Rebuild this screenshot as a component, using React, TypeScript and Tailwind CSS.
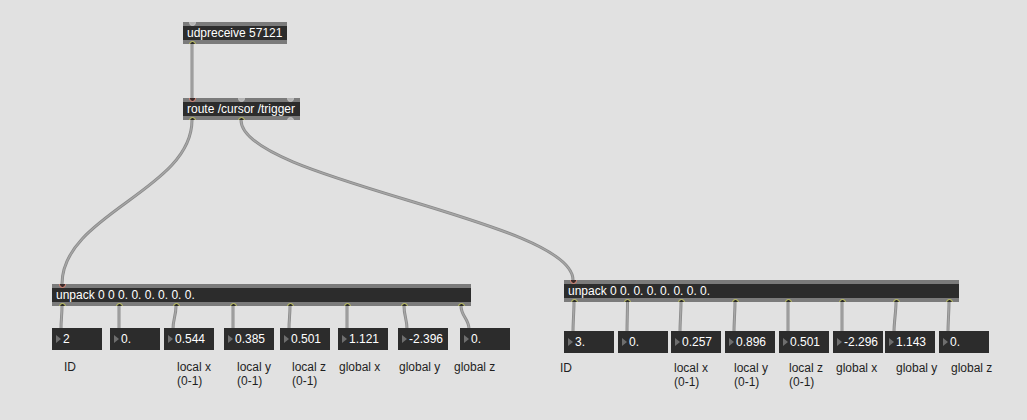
import React from "react";

type Dot = { x: number; kind: "in" | "inOn" | "out" | "outOff" };

const font = { fontFamily: '"Liberation Sans", Arial, sans-serif' };

// object box of the patch, placed at its spot on the canvas
function ObjBox({ x, y, w, text, dots }: { x: number; y: number; w: number; text: string; dots: Dot[] }) {
  return (
    <div className="absolute flex flex-col overflow-hidden" style={{ left: x, top: y, width: w }}>
      <div className="h-[4px] bg-[#7b7b7b]" />
      <div className="h-[14px] bg-[#2c2c2c] pl-[4px] text-[12px] leading-[14px] text-white whitespace-nowrap">{text}</div>
      <div className="h-[4px] bg-[#7b7b7b]" />
      {dots.map((d, i) => {
        const top = d.kind === "in" || d.kind === "inOn";
        let cls = "absolute w-[7px] h-[7px] rounded-full border ";
        if (d.kind === "in") cls += "bg-[#b4b4b4] border-[#c4c4c4]";
        else if (d.kind === "inOn") cls += "bg-[#3a2a2a] border-[#e8907e]";
        else if (d.kind === "out") cls += "bg-[#2a2a2a] border-[#d2d46a]";
        else cls += "bg-[#b4b4b4] border-[#c4c4c4]";
        return (
          <div
            key={i}
            className={cls}
            style={top ? { left: d.x - x - 3.5, top: -3.5 } : { left: d.x - x - 3.5, bottom: -3.5 }}
          />
        );
      })}
    </div>
  );
}

// number box with its comment label under it
function NumBox({ x, y, v, label, lx, ly }: { x: number; y: number; v: string; label: string[]; lx: number; ly: number }) {
  return (
    <div className="absolute flex flex-col items-start" style={{ left: x, top: y }}>
      <div className="h-[22px] w-[50px] bg-[#2c2c2c] flex items-center text-white text-[12px]">
        <svg width="5" height="8" viewBox="0 0 5 8" className="ml-[4px] mr-[2px] shrink-0">
          <polygon points="0,0 5,4 0,8" fill="#6e6e6e" />
        </svg>
        <span>{v}</span>
      </div>
      {label.length > 0 && (
        <div
          className="text-[12px] leading-[14px] text-[#1f1f1f] whitespace-nowrap"
          style={{ marginLeft: lx, marginTop: ly }}
        >
          {label.map((l, i) => (
            <div key={i}>{l}</div>
          ))}
        </div>
      )}
    </div>
  );
}

// [box x, value, label lines, label x]
type Item = [number, string, string[], number];

const leftBoxes: Item[] = [
  [52, "2", ["ID"], 64],
  [110, "0.", [], 0],
  [164, "0.544", ["local x", "(0-1)"], 177],
  [224, "0.385", ["local y", "(0-1)"], 237],
  [280, "0.501", ["local z", "(0-1)"], 292],
  [338, "1.121", ["global x"], 339],
  [398, "-2.396", ["global y"], 399],
  [460, "0.", ["global z"], 454],
];
const leftOuts = [62, 119, 176, 233, 290, 347, 404, 461];

const rightBoxes: Item[] = [
  [564, "3.", ["ID"], 560],
  [618, "0.", [], 0],
  [671, "0.257", ["local x", "(0-1)"], 674],
  [725, "0.896", ["local y", "(0-1)"], 734],
  [779, "0.501", ["local z", "(0-1)"], 789],
  [833, "-2.296", ["global x"], 836],
  [885, "1.143", ["global y"], 896],
  [939, "0.", ["global z"], 951],
];
const rightOuts = [574, 627.5, 681, 735, 788, 842, 896, 949];

function cord(x1: number, y1: number, x2: number, y2: number, k: number) {
  return `M${x1} ${y1} C${x1} ${y1 + k} ${x2} ${y2 - k} ${x2} ${y2}`;
}

export default function App() {
  const cords: string[] = [
    cord(192, 44, 192, 98, 10),
    cord(192, 120, 62, 284, 70),
    cord(241, 120, 573, 280, 60),
  ];
  leftOuts.forEach((o, i) => cords.push(cord(o, 306, leftBoxes[i][0] + 9, 329, 10)));
  rightOuts.forEach((o, i) => cords.push(cord(o, 302, rightBoxes[i][0] + 9, 332, 10)));

  return (
    <div className="relative w-[1027px] h-[420px] bg-[#e1e1e1] overflow-hidden" style={font}>
      <svg className="absolute inset-0" width="1027" height="420">
        {cords.map((d, i) => (
          <g key={i} fill="none">
            <path d={d} stroke="#8a8a8a" strokeWidth="3" />
            <path d={d} stroke="#a6a6a6" strokeWidth="1.4" />
          </g>
        ))}
      </svg>

      <ObjBox x={183} y={22} w={104} text="udpreceive 57121" dots={[{ x: 192, kind: "in" }, { x: 192, kind: "out" }]} />
      <ObjBox
        x={183}
        y={98}
        w={117}
        text="route /cursor /trigger"
        dots={[
          { x: 192, kind: "inOn" }, { x: 241, kind: "in" }, { x: 290, kind: "in" },
          { x: 192, kind: "out" }, { x: 241, kind: "out" }, { x: 290, kind: "outOff" },
        ]}
      />
      <ObjBox
        x={52}
        y={284}
        w={419}
        text="unpack 0 0 0. 0. 0. 0. 0. 0."
        dots={[{ x: 62, kind: "inOn" }, ...leftOuts.map((o) => ({ x: o, kind: "out" as const }))]}
      />
      <ObjBox
        x={564}
        y={280}
        w={395}
        text="unpack 0 0. 0. 0. 0. 0. 0. 0."
        dots={[{ x: 573, kind: "inOn" }, ...rightOuts.map((o) => ({ x: o, kind: "out" as const }))]}
      />

      {leftBoxes.map(([x, v, l, lx], i) => (
        <NumBox key={"l" + i} x={x} y={328} v={v} label={l} lx={lx - x} ly={10} />
      ))}
      {rightBoxes.map(([x, v, l, lx], i) => (
        <NumBox key={"r" + i} x={x} y={331} v={v} label={l} lx={lx - x} ly={8} />
      ))}
    </div>
  );
}
